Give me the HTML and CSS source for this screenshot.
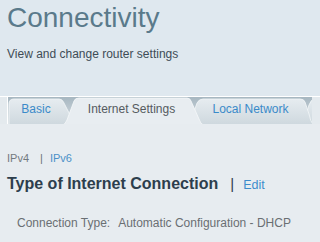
FILE: index.html
```html
<!DOCTYPE html>
<html lang="en">
<head>
<meta charset="utf-8">
<title>Connectivity</title>
<link rel="stylesheet" href="styles.css">
</head>
<body>
<div class="header">
  <h1 class="title">Connectivity</h1>
  <p class="subtitle">View and change router settings</p>
</div>
<div class="panel">
  <div class="tabs">
    <svg class="tab-shapes" width="312" height="27" viewBox="0 0 312 27" aria-hidden="true">
      <defs>
        <linearGradient id="notch" x1="0" y1="0" x2="0" y2="1">
          <stop offset="0" stop-color="#a7b7c1"/>
          <stop offset="1" stop-color="#d6dee3"/>
        </linearGradient>
        <linearGradient id="idle" x1="0" y1="0" x2="0" y2="1">
          <stop offset="0" stop-color="#e6ecf0"/>
          <stop offset="1" stop-color="#cdd7dd"/>
        </linearGradient>
      </defs>
      <rect x="8" y="0" width="304" height="27" fill="url(#notch)"/>
      <path d="M303,29 L309,8 Q311,2 315,2 H330 V29 Z" fill="url(#idle)" stroke="#f3f6f8" stroke-width="0.8"/>
      <path d="M9,29 V7 Q9,2 14,2 H59 Q62,2 63.5,5 L72,22 Q74,26 78,29 Z" fill="url(#idle)" stroke="#f3f6f8" stroke-width="0.8"/>
      <path d="M186,29 Q190,27 191,23 L197,6 Q199,2 203,2 H300 Q304,2 305,5 L309,17 Q310,24 314,29 Z" fill="url(#idle)" stroke="#f3f6f8" stroke-width="0.8"/>
      <path d="M61,29 Q66,27 67,23 L74,4 Q75,1 79,1 H187 Q190,1 191,4 L199,22 Q200,27 205,29 Z" fill="#e8edf1" stroke="#f6f9fa" stroke-width="0.8"/>
      <line x1="7.5" y1="0" x2="7.5" y2="27" stroke="#ffffff" stroke-width="1"/>
    </svg>
    <a class="tab tab-basic">Basic</a>
    <span class="tab tab-internet">Internet Settings</span>
    <a class="tab tab-local">Local Network</a>
  </div>
  <div class="content">
    <div class="subnav">
      <span class="sub-current">IPv4</span><span class="sub-sep">|</span><a class="sub-link">IPv6</a>
    </div>
    <div class="section-head">
      <h2 class="section-title">Type of Internet Connection</h2><span class="head-sep">|</span><a class="edit-link">Edit</a>
    </div>
    <div class="field">
      <span class="field-label">Connection Type:</span><span class="field-value">Automatic Configuration - DHCP</span>
    </div>
  </div>
</div>
</body>
</html>
```

FILE: styles.css
```css
html {
  background: #e7ecf0;
}
body {
  margin: 0;
  font-family: "Liberation Sans", Arial, sans-serif;
  overflow: hidden;
}
.header {
  background: #dfe8ef;
  height: 96px;
  box-sizing: border-box;
  padding: 2px 7px 0;
}
.title {
  margin: 0;
  font-size: 28px;
  line-height: 32px;
  font-weight: normal;
  color: #5a7a8b;
}
.subtitle {
  margin: 13px 0 0;
  font-size: 12px;
  line-height: 14px;
  color: #3e4c56;
}
.panel {
  border-top: 1px solid #ffffff;
  background: #e7ecf0;
}
.tabs {
  position: relative;
  height: 27px;
  box-sizing: border-box;
  padding: 5px 0 0 9px;
  display: flex;
  align-items: flex-start;
  background: #e4eaee;
}
.tab-shapes {
  position: absolute;
  left: 0;
  top: 0;
  display: block;
}
.tab {
  position: relative;
  font-size: 12px;
  line-height: 14px;
  text-align: center;
  color: #3a8ac9;
  text-decoration: none;
}
.tab-basic { width: 54px; }
.tab-internet { width: 137px; color: #555b60; }
.tab-local { width: 101px; }
.content {
  padding: 28px 7px 20px;
}
.subnav {
  font-size: 11px;
  line-height: 13px;
  display: flex;
}
.sub-current { color: #737a80; }
.sub-sep { color: #6b7278; margin: 0 7px 0 11px; }
.sub-link { color: #4a90c8; }
.section-head {
  margin-top: 9px;
  display: flex;
  align-items: baseline;
}
.section-title {
  margin: 0;
  font-size: 16px;
  line-height: 20px;
  font-weight: bold;
  color: #2d3e4d;
}
.head-sep {
  font-size: 15px;
  color: #2d3e4d;
  margin-left: 12px;
}
.edit-link {
  margin-left: 9px;
  font-size: 12.5px;
  color: #3d8ccc;
}
.field {
  margin-top: 22px;
  padding-left: 10px;
  font-size: 12px;
  line-height: 14px;
  color: #6a6f73;
  display: flex;
}
.field-value {
  margin-left: 8px;
}
```
